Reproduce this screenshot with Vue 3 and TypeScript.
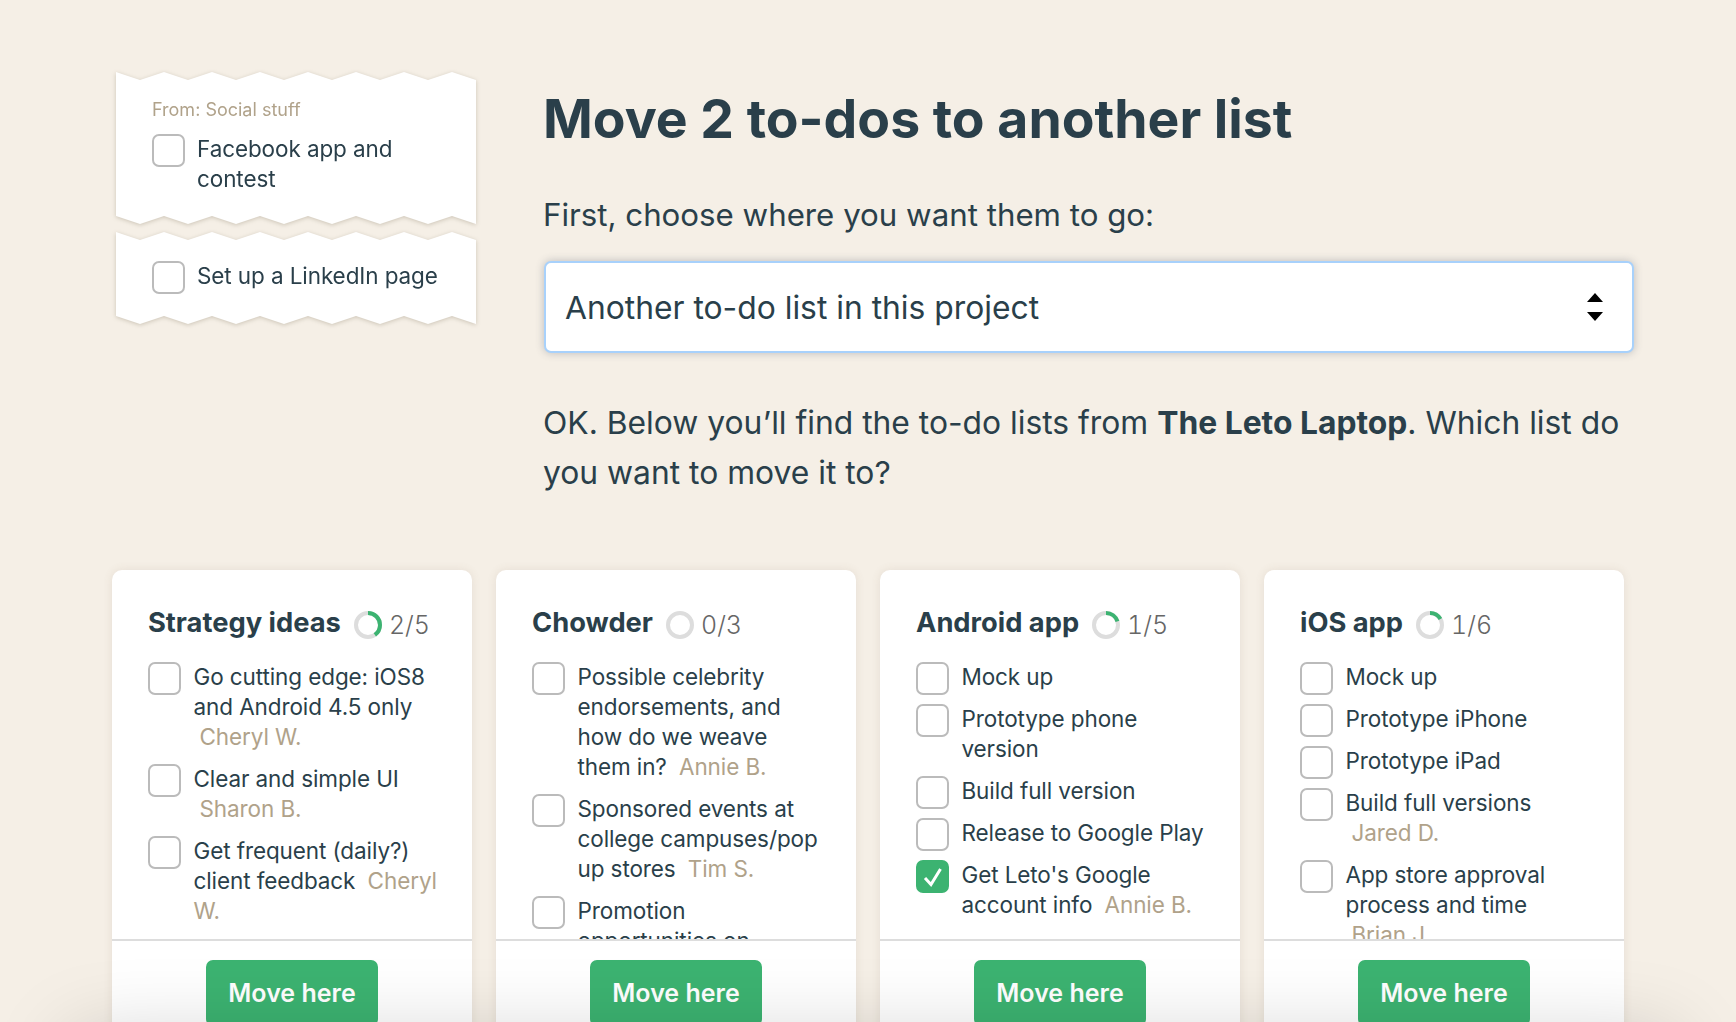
<script setup lang="ts">
interface Todo { text: string; who?: string; done?: boolean }
interface List { name: string; done: number; total: number; todos: Todo[] }

const lists: List[] = [
  { name: 'Strategy ideas', done: 2, total: 5, todos: [
    { text: 'Go cutting edge: iOS8 and Android 4.5 only', who: 'Cheryl W.' },
    { text: 'Clear and simple UI', who: 'Sharon B.' },
    { text: 'Get frequent (daily?) client feedback', who: 'Cheryl W.' },
  ] },
  { name: 'Chowder', done: 0, total: 3, todos: [
    { text: 'Possible celebrity endorsements, and how do we weave them in?', who: 'Annie B.' },
    { text: 'Sponsored events at college campuses/pop up stores', who: 'Tim S.' },
    { text: 'Promotion opportunities on' },
  ] },
  { name: 'Android app', done: 1, total: 5, todos: [
    { text: 'Mock up' },
    { text: 'Prototype phone version' },
    { text: 'Build full version' },
    { text: 'Release to Google Play' },
    { text: "Get Leto's Google account info", who: 'Annie B.', done: true },
  ] },
  { name: 'iOS app', done: 1, total: 6, todos: [
    { text: 'Mock up' },
    { text: 'Prototype iPhone' },
    { text: 'Prototype iPad' },
    { text: 'Build full versions', who: 'Jared D.' },
    { text: 'App store approval process and time', who: 'Brian J.' },
  ] },
]

const R = 12
const CIRC = 2 * Math.PI * R
function dash(l: List): string {
  return `${(l.done / l.total) * CIRC} ${CIRC}`
}

function tornPath(h: number): string {
  const w = 360, p = 24, a = 8
  const pts: string[] = []
  for (let x = 0, i = 0; x <= w; x += p, i++) pts.push(`${x}px ${i % 2 ? a : 0}px`)
  for (let x = w, i = w / p; x >= 0; x -= p, i--) pts.push(`${x}px ${h - (i % 2 ? 0 : a)}px`)
  return `polygon(${pts.join(',')})`
}
</script>

<template>
  <div class="page">
    <div class="top">
      <aside class="side">
        <div class="torn">
          <div class="sheet first" :style="{ clipPath: tornPath(152) }">
            <div class="from">From: Social stuff</div>
            <div class="row">
              <span class="box"></span>
              <span class="txt">Facebook app and contest</span>
            </div>
          </div>
        </div>
        <div class="torn">
          <div class="sheet second" :style="{ clipPath: tornPath(92) }">
            <div class="row">
              <span class="box"></span>
              <span class="txt">Set up a LinkedIn page</span>
            </div>
          </div>
        </div>
      </aside>
      <main class="main">
        <h1>Move 2 to-dos to another list</h1>
        <p class="ask">First, choose where you want them to go:</p>
        <div class="select">
          <span>Another to-do list in this project</span>
          <svg width="18" height="28" viewBox="0 0 18 28"><path d="M9 0l8 9H1zM1 19h16l-8 9z" fill="#000"/></svg>
        </div>
        <p class="ok">OK. Below you’ll find the to-do lists from <b>The Leto Laptop</b>. Which list do you want to move it to?</p>
      </main>
    </div>
    <section class="cards">
      <article v-for="l in lists" :key="l.name" class="card">
        <div class="body">
          <h2>
            <span class="name">{{ l.name }}</span>
            <svg class="ring" width="28" height="28" viewBox="0 0 28 28">
              <circle cx="14" cy="14" :r="R" fill="none" stroke="#ddd" stroke-width="4"/>
              <circle cx="14" cy="14" :r="R" fill="none" stroke="#3cb371" stroke-width="4" :stroke-dasharray="dash(l)" transform="rotate(-90 14 14)"/>
            </svg>
            <span class="count">{{ l.done }}/{{ l.total }}</span>
          </h2>
          <div v-for="t in l.todos" :key="t.text" class="todo">
            <span class="box" :class="{ on: t.done }">
              <svg v-if="t.done" width="20" height="20" viewBox="0 0 20 20"><path d="M2 11l6 6.500L17.500 2" fill="none" stroke="#fff" stroke-width="3"/></svg>
            </span>
            <span class="txt">{{ t.text }} <span v-if="t.who" class="who">{{ t.who }}</span></span>
          </div>
        </div>
        <div class="foot"><button class="move">Move here</button></div>
      </article>
    </section>
    <div class="fold"></div>
  </div>
</template>

<style scoped>
.page {
  position: relative;
  height: 1022px;
  overflow: hidden;
  background: #f5efe6;
  color: #2a3f4a;
  font-family: Inter, "Noto Sans", sans-serif;
  box-sizing: border-box;
  padding: 72px 112px 0;
}
.top { display: flex; height: 498px; }
.side { flex: none; width: 360px; margin-left: 4px; display: flex; flex-direction: column; gap: 8px; }
.torn { filter: drop-shadow(0 1px 2px rgba(110, 95, 70, .3)); }
.sheet { background: #fff; box-sizing: border-box; padding: 0 36px; }
.first { height: 152px; padding-top: 27px; }
.second { height: 92px; padding-top: 29px; }
.from { font-size: 18px; line-height: 22px; color: #b0a28a; margin-bottom: 13px; }
.row { display: flex; gap: 12px; font-size: 22.500px; letter-spacing: -.1px; line-height: 30px; }
.box {
  flex: none;
  width: 33px;
  height: 33px;
  margin-bottom: -4px;
  box-sizing: border-box;
  border: 2px solid #bbb;
  border-radius: 7px;
  background: #fff;
  display: flex;
  align-items: center;
  justify-content: center;
}
.box.on { background: #3cb371; border-color: #3cb371; }
.main { flex: none; margin-left: 67px; width: 1091px; }
h1 { margin: 17px 0 0; font-size: 53.500px; line-height: 60px; font-weight: 700; }
.ask { margin: 44px 0 0; font-size: 31.250px; line-height: 44px; }
.select {
  margin: 24px 0 0 1px;
  height: 92px;
  box-sizing: border-box;
  background: #fff;
  border: 2px solid #a8d1fb;
  border-radius: 7px;
  box-shadow: 0 0 8px rgba(60, 70, 90, .3);
  display: flex;
  align-items: center;
  justify-content: space-between;
  padding: 0 28px 0 19px;
  font-size: 31.800px;
}
.ok { margin: 45px 0 0; font-size: 31.800px; line-height: 50px; }
.ok b { font-weight: 700; }
.cards { display: grid; grid-template-columns: repeat(4, 360px); gap: 24px; }
.card {
  height: 520px;
  background: #fff;
  border-radius: 10px 10px 0 0;
  box-shadow: 0 0 10px rgba(120, 100, 70, .12);
  display: flex;
  flex-direction: column;
  overflow: hidden;
}
.body { height: 369px; flex: none; overflow: hidden; padding: 35px 34px 0 36px; box-sizing: border-box; }
h2 { margin: 0 0 19px; height: 38px; display: flex; align-items: flex-start; font-size: 27.300px; font-weight: 700; }
.name { line-height: 35px; }
.ring { margin: 6px 0 0 13px; }
.count { margin-left: 7px; font-size: 25px; line-height: 40px; font-weight: 300; color: #666; font-variant-numeric: tabular-nums; }
.todo { display: flex; gap: 12.500px; margin-bottom: 12px; font-size: 22.500px; letter-spacing: -.1px; line-height: 30px; }
.who { color: #b0a28a; margin-left: 6px; }
.foot { border-top: 2px solid #ddd; padding-top: 19px; display: flex; justify-content: center; }
.move {
  width: 172px;
  height: 66px;
  border: 0;
  border-radius: 7px;
  background: #3cb371;
  color: #fff;
  font: 600 25px Inter, "Noto Sans", sans-serif;
}
.fold {
  position: absolute;
  left: 70px;
  right: 60px;
  top: 1036px;
  height: 100px;
  box-shadow: 0 0 80px rgba(0, 0, 0, .18);
  pointer-events: none;
}
</style>
